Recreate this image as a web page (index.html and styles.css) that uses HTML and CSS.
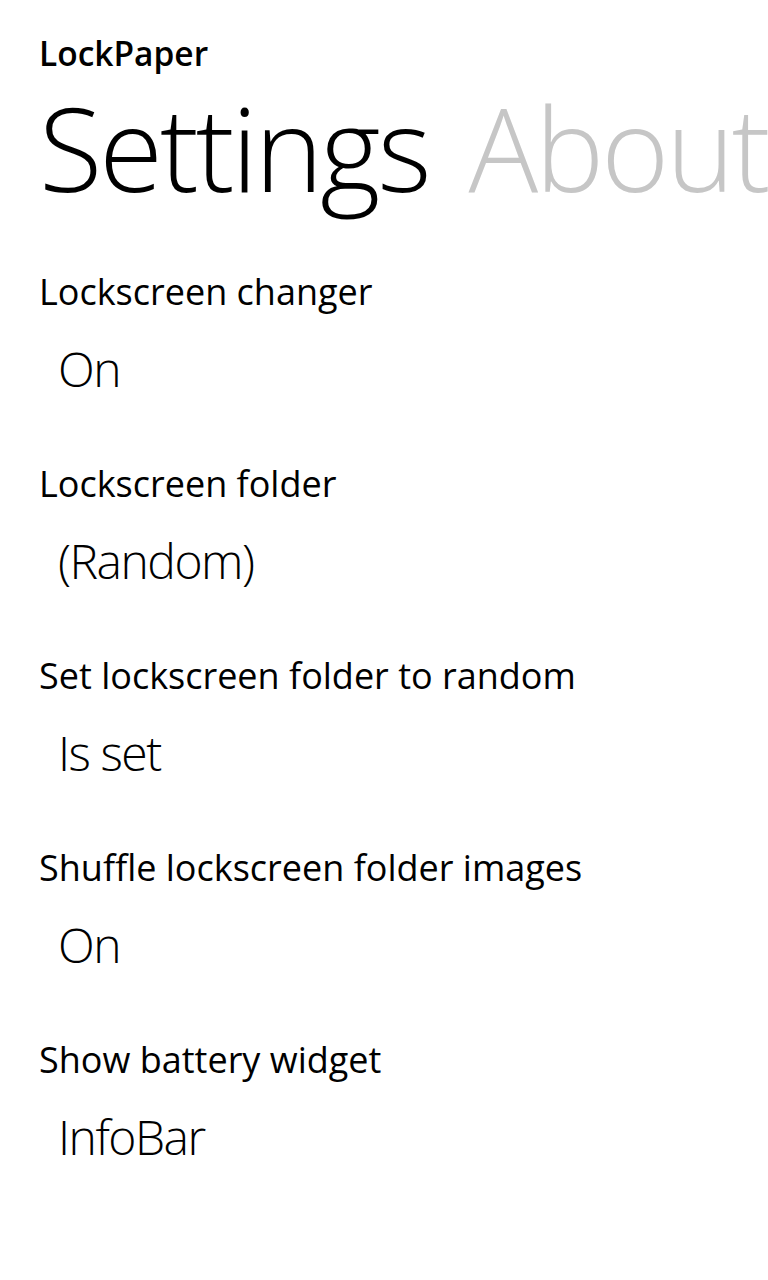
FILE: index.html
```html
<!DOCTYPE html>
<html lang="en">
<head>
    <meta charset="UTF-8">
    <meta name="viewport" content="width=device-width, initial-scale=1.0">
    <title>LockPaper</title>
    <link rel="stylesheet" href="styles.css">
</head>
<body>
    <div id="page">
        <div class="app-title">LockPaper</div>
        <div class="pivot-headers">
            <span class="pivot-item active">Settings</span>
            <span class="pivot-item">About</span>
        </div>

        <div class="settings">
            <div class="setting">
                <div class="setting-label">Lockscreen changer</div>
                <div class="setting-value">On</div>
            </div>
            <div class="setting">
                <div class="setting-label">Lockscreen folder</div>
                <div class="setting-value">(Random)</div>
            </div>
            <div class="setting">
                <div class="setting-label">Set lockscreen folder to random</div>
                <div class="setting-value">Is set</div>
            </div>
            <div class="setting">
                <div class="setting-label">Shuffle lockscreen folder images</div>
                <div class="setting-value">On</div>
            </div>
            <div class="setting">
                <div class="setting-label">Show battery widget</div>
                <div class="setting-value">InfoBar</div>
            </div>
        </div>
    </div>
</body>
</html>
```

FILE: styles.css
```css
body {
    font-family: "Open Sans", "Noto Sans", sans-serif;
    margin: 0;
    padding: 0;
    background-color: #fff;
    color: #000;
    width: 768px;
    height: 1280px;
    overflow: hidden;
}

#page {
    padding: 33px 0 0 39px;
}

.app-title {
    font-size: 33.5px;
    font-weight: 600;
    line-height: 40px;
    height: 40px;
}

.pivot-headers {
    margin-top: 9px;
    font-size: 116px;
    font-weight: 300;
    letter-spacing: -3px;
    line-height: 130px;
    height: 130px;
    white-space: nowrap;
    display: flex;
    gap: 40px;
}

.pivot-item {
    color: #c6c6c6;
}

.pivot-item.active {
    color: #000;
}

.settings {
    margin-top: 60px;
    display: flex;
    flex-direction: column;
    gap: 65px;
}

.setting {
    display: flex;
    flex-direction: column;
    gap: 27px;
}

.setting-label {
    font-size: 36px;
    line-height: 40px;
}

.setting-value {
    font-size: 48px;
    font-weight: 300;
    letter-spacing: -1.5px;
    line-height: 60px;
    padding-left: 19px;
}
```
